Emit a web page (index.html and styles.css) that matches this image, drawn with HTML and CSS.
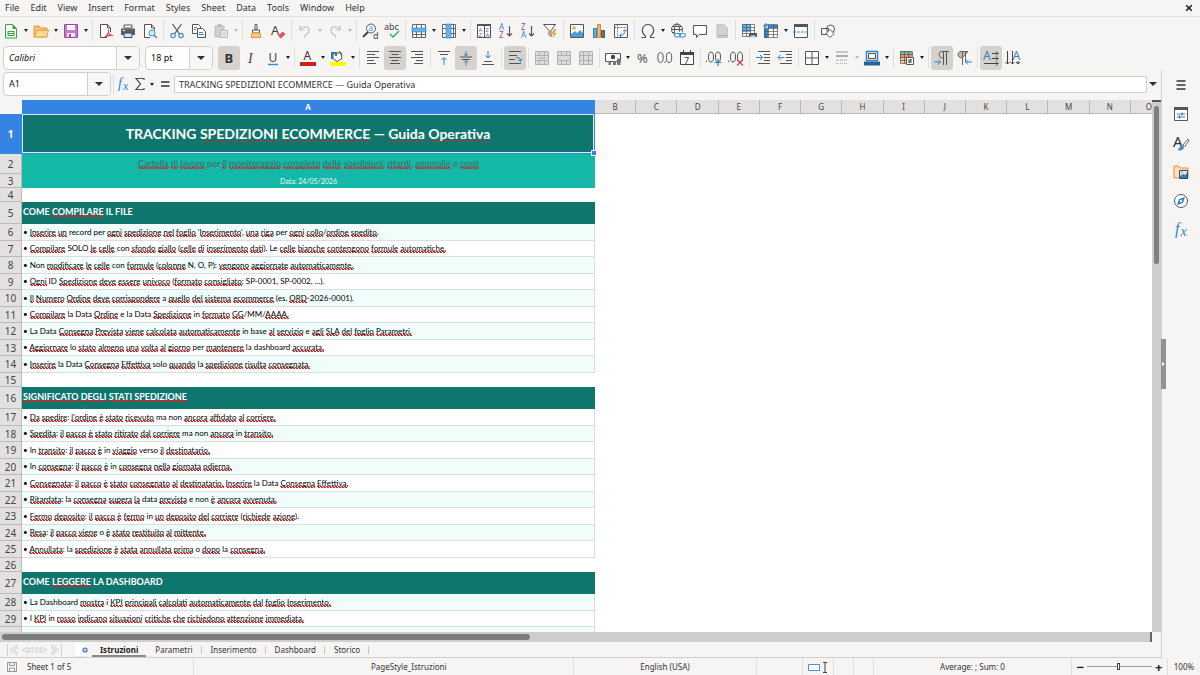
FILE: index.html
```html
<!DOCTYPE html>
<html lang="it">
<head>
<meta charset="utf-8">
<title>Tracking spedizioni ecommerce</title>
<link rel="stylesheet" href="styles.css">
</head>
<body>
<nav class="menubar" aria-label="Menu">
<button>File</button><button>Edit</button><button>View</button><button>Insert</button><button>Format</button><button>Styles</button><button>Sheet</button><button>Data</button><button>Tools</button><button>Window</button><button>Help</button>
<button class="close" aria-label="Close document"><svg viewBox="0 0 8 8"><path d="M1.2 1.2l5.6 5.6M6.8 1.2L1.2 6.8" stroke="#222" stroke-width="1.600"/></svg></button>
</nav>

<div class="toolbar standard" role="toolbar" aria-label="Standard">
<button aria-label="New"><svg viewBox="0 0 16 16"><path d="M2.500 1.500h7l4 4v9.500h-11z" fill="#fff" stroke="#37a446"/><path d="M9.500 1v5h4z" fill="#37a446"/><path d="M4.500 8h7v5h-7z" fill="#37a446"/><path d="M5.500 9.500h5M5.500 11.500h5" stroke="#fff"/></svg></button><button class="dd" aria-label="New options"></button>
<button aria-label="Open"><svg viewBox="0 0 16 16"><path d="M1 3h5l1 2h7v9H1z" fill="#f5c277" stroke="#e09a38"/><path d="M3.500 7.500h12l-2 6.500H1.500z" fill="#ffd796" stroke="#e8a548"/></svg></button><button class="dd" aria-label="Open options"></button>
<button aria-label="Save"><svg viewBox="0 0 16 16"><path d="M1.500 1.500h13v13h-13z" fill="#c77bcb" stroke="#9a4aa2"/><path d="M4 2h8v5H4z" fill="#fff"/><path d="M4 10h8v4H4z" fill="#f4e4f4"/><path d="M6 11h2v3H6z" fill="#9a4aa2"/></svg></button><button class="dd" aria-label="Save options"></button>
<i class="sep"></i>
<button aria-label="Export as PDF"><svg viewBox="0 0 16 16"><path d="M9 14.500H2.500v-13h7l3 3.500v4" fill="#fff" stroke="#555"/><path d="M9.500 1.500V5h3" fill="none" stroke="#555"/><path d="M7 14c3-2 4-4 3.500-6.500C9.500 10 12 12.500 15 12.500c-3-.5-6 0-8 1.500z" fill="none" stroke="#e0495a" stroke-width="1.200"/></svg></button>
<button aria-label="Print"><svg viewBox="0 0 16 16"><path d="M4 2h8v3H4z" fill="#fff" stroke="#555"/><path d="M1 5.500h14V12H1z" fill="#5b6064"/><path d="M4 10h8v4.500H4z" fill="#cfe6fa" stroke="#3c4a55"/><path d="M3 7.500h2" stroke="#fff"/></svg></button>
<button aria-label="Print preview"><svg viewBox="0 0 16 16"><path d="M8 14.500H2.500v-13h7l3 3.500v2" fill="#fff" stroke="#555"/><path d="M9.500 1.500V5h3" fill="none" stroke="#555"/><circle cx="10" cy="10" r="3" fill="#d4ebfb" stroke="#3b8ed0"/><path d="M12 12l3 3" stroke="#3b8ed0" stroke-width="1.500"/></svg></button>
<i class="sep"></i>
<button aria-label="Cut"><svg viewBox="0 0 16 16"><path d="M3.500 1l7 10M12.500 1l-7 10" stroke="#555" stroke-width="1.200"/><circle cx="4" cy="12.500" r="2.200" fill="none" stroke="#3b8ed0" stroke-width="1.200"/><circle cx="12" cy="12.500" r="2.200" fill="none" stroke="#3b8ed0" stroke-width="1.200"/></svg></button>
<button aria-label="Copy"><svg viewBox="0 0 16 16"><path d="M1.500 1.500h6l2 2v7h-8z" fill="#fff" stroke="#555"/><path d="M6.500 5.500h5l3 3v6h-8z" fill="#fff" stroke="#555"/><path d="M3 4.500h3M3 6.500h2M8 9.500h4M8 11.500h5" stroke="#3b8ed0"/></svg></button>
<button aria-label="Paste" disabled><svg viewBox="0 0 16 16"><path d="M2 3h9v11H2z" fill="#d2d0ce" stroke="#bbb"/><path d="M4.500 1h4v3h-4z" fill="#bbb"/><path d="M7.500 7.500h7v7h-7z" fill="#eee" stroke="#b5b5b5"/><path d="M9 10h4M9 12h4" stroke="#c4c4c4"/></svg></button><button class="dd" aria-label="Paste options" disabled></button>
<i class="sep"></i>
<button aria-label="Clone formatting"><svg viewBox="0 0 16 16"><path d="M7 1.500h2V7H7z" fill="#fff" stroke="#555"/><path d="M4.500 7h7v3h-7z" fill="#fff" stroke="#555"/><path d="M4 10h8l1 4.500H3z" fill="#f6c98a" stroke="#e09a38"/></svg></button>
<button aria-label="Clear formatting"><svg viewBox="0 0 16 16"><text x="1" y="12" fill="#444" font-size="13">A</text><path d="M8 13l4.500-4.500 3 2.500L11 15.500z" fill="#e8505b"/></svg></button>
<i class="sep"></i>
<button aria-label="Undo" disabled><svg viewBox="0 0 16 16"><path d="M3 2.500V7h4.500M3.500 6.500C6 2.500 12 3 12 7.500c0 3-3 4-5 6.500" fill="none" stroke="#c3c1bf" stroke-width="1.200"/></svg></button><button class="dd" aria-label="Undo options" disabled></button>
<button aria-label="Redo" disabled><svg viewBox="0 0 16 16"><path d="M13 2.500V7H8.500M12.500 6.500C10 2.500 4 3 4 7.500c0 3 3 4 5 6.500" fill="none" stroke="#c3c1bf" stroke-width="1.200"/></svg></button><button class="dd" aria-label="Redo options" disabled></button>
<i class="sep"></i>
<button aria-label="Find and replace"><svg viewBox="0 0 16 16"><circle cx="9" cy="5.500" r="4.500" fill="#fff" stroke="#555"/><path d="M6 9l-5 5" stroke="#444" stroke-width="2"/><text x="6.500" y="8" font-size="8" fill="#3b8ed0">a</text><text x="11" y="15.500" font-size="9" fill="#444">d</text></svg></button>
<button aria-label="Spelling"><svg viewBox="0 0 16 16"><text x="0" y="7" font-size="9" fill="#444">abc</text><path d="M6 11l3 3 6-6" fill="none" stroke="#3fae6a" stroke-width="1.500"/></svg></button>
<i class="sep"></i>
<button aria-label="Row"><svg viewBox="0 0 16 16"><path d="M1.500 1.500h13v13h-13z" fill="#fff"/><path d="M1.500 1.500h13v13h-13zM1.500 11.500h13M5.500 1v14M10.500 1v14" fill="none" stroke="#666"/><path d="M1 5h14v4H1z" fill="#63b4ee" stroke="#2c7fc0" stroke-width=".6"/></svg></button><button class="dd" aria-label="Row options"></button>
<button aria-label="Column"><svg viewBox="0 0 16 16"><path d="M1.500 1.500h13v13h-13z" fill="#fff"/><path d="M1.500 1.500h13v13h-13zM12.500 1v14M1 5.500h14M1 10.500h14" fill="none" stroke="#666"/><path d="M5 1h5v14H5z" fill="#63b4ee" stroke="#2c7fc0" stroke-width=".6"/></svg></button><button class="dd" aria-label="Column options"></button>
<i class="sep"></i>
<button aria-label="Sort"><svg viewBox="0 0 16 16"><path d="M1.500 1.500h13v13h-13zM8.500 1v14" fill="#fff" stroke="#555"/><path d="M1 1h14v2H1z" fill="#555"/><text x="2.500" y="8.500" font-size="6" fill="#2c86cd">A</text><text x="2.500" y="14" font-size="6" fill="#a349a4">Z</text><text x="9.500" y="8.500" font-size="6" fill="#a349a4">Z</text><text x="9.500" y="14" font-size="6" fill="#2c86cd">A</text></svg></button>
<button aria-label="Sort ascending"><svg viewBox="0 0 16 16"><text x="1" y="7" font-size="8" fill="#2c86cd">A</text><text x="1" y="15" font-size="8" fill="#a349a4">Z</text><path d="M11.500 3v10M9 10.500l2.500 2.500 2.500-2.500" fill="none" stroke="#555" stroke-width="1.200"/></svg></button>
<button aria-label="Sort descending"><svg viewBox="0 0 16 16"><text x="1" y="7" font-size="8" fill="#a349a4">Z</text><text x="1" y="15" font-size="8" fill="#2c86cd">A</text><path d="M11.500 3v10M9 10.500l2.500 2.500 2.500-2.500" fill="none" stroke="#555" stroke-width="1.200"/></svg></button>
<button aria-label="AutoFilter"><svg viewBox="0 0 16 16"><path d="M1.500 1.500h12l-4.500 6v6l-2-2v-4z" fill="#fff" stroke="#555"/><path d="M12 6l-3 5h2.500L9.500 15.500 15 10h-2.500L14.500 6z" fill="#f3a647"/></svg></button>
<i class="sep"></i>
<button aria-label="Insert image"><svg viewBox="0 0 16 16"><path d="M1.500 1.500h13v13h-13z" fill="#fff" stroke="#555"/><circle cx="5" cy="5" r="1.800" fill="#f3a647"/><path d="M2 14v-3l4-3 2 2 3-3 3 3v4z" fill="#4c9cd8"/></svg></button>
<button aria-label="Insert chart"><svg viewBox="0 0 16 16"><path d="M2.500 5.500h3v9h-3z" fill="#63b4ee" stroke="#2c7fc0"/><path d="M6.500 1.500h3v13h-3z" fill="#f6b469" stroke="#d98a35"/><path d="M10.500 7.500h3v7h-3z" fill="#777" stroke="#555"/></svg></button>
<button aria-label="Insert pivot table"><svg viewBox="0 0 16 16"><path d="M1.500 1.500h13v13h-13z" fill="#fff" stroke="#555"/><path d="M1.500 4.500h13M4.500 1.500v13" stroke="#777" stroke-dasharray="2 1"/><path d="M7 12.500c3.500 0 5-2 5-5.500M10 8.500l2-2 2 2M8.500 10.500l-2 2 2 2" fill="none" stroke="#2c86cd"/></svg></button>
<i class="sep"></i>
<button aria-label="Special character"><svg viewBox="0 0 16 16"><path d="M1.500 14.500h4v-1.500C0 8.500 2.500 1.500 8 1.500S16 8.500 10.500 13v1.500h4" fill="none" stroke="#555" stroke-width="1.200"/></svg></button><button class="dd" aria-label="Special character options"></button>
<button aria-label="Insert hyperlink"><svg viewBox="0 0 16 16"><g fill="none" stroke="#555"><circle cx="7" cy="6.500" r="5.500"/><ellipse cx="7" cy="6.500" rx="2.500" ry="5.500"/><path d="M1.500 6.500h11M2.500 3.500h9M2.500 9.500h4"/></g><path d="M5 9h11v7H5z" fill="#f6f5f4"/><rect x="4.500" y="10.500" width="6" height="3.500" rx="1.700" fill="none" stroke="#2c86cd"/><rect x="9.500" y="10.500" width="6" height="3.500" rx="1.700" fill="none" stroke="#2c86cd"/></svg></button>
<button aria-label="Insert comment"><svg viewBox="0 0 16 16"><path d="M1.500 2.500h13v9h-7l-3 3v-3h-3z" fill="#fff" stroke="#555"/></svg></button>
<button aria-label="Headers and footers" disabled><svg viewBox="0 0 16 16"><path d="M3 1.500h7l3.500 3.500v9.500H3z" fill="#d4d2d0" stroke="#c2c0be"/><path d="M4 12.500h9" stroke="#aaa"/></svg></button>
<i class="sep"></i>
<button aria-label="Define print area"><svg viewBox="0 0 16 16"><path d="M1.500 1.500h12v12h-12z" fill="#fff"/><path d="M1 1h9v8H1z" fill="#63b4ee"/><path d="M1.500 1.500h12v12h-12zM1.500 4.500h12M1.500 7.500h12M1.500 10.500h12M5.500 1.500v12M9.500 1.500v12" fill="none" stroke="#555" stroke-width=".7"/><path d="M8 10h8v4H8z" fill="#555"/><path d="M9.500 12.500h5V15h-5z" fill="#bfe0f7"/></svg></button>
<button aria-label="Freeze rows and columns"><svg viewBox="0 0 16 16"><path d="M1 2h14v13H1z" fill="#fff"/><path d="M5 2h10v3H5zM1 6h4v9H1z" fill="#2c86cd"/><path d="M1.500 1.500h13v13h-13zM1.500 5.500h13M1.500 8.500h13M1.500 11.500h13M5.500 1.500v13M10.500 1.500v13" fill="none" stroke="#555" stroke-width=".7"/><path d="M3 0v6M0 3h6" stroke="#2c86cd"/></svg></button><button class="dd" aria-label="Freeze options"></button>
<button aria-label="Split window"><svg viewBox="0 0 16 16"><path d="M1.500 1.500h13v13h-13z" fill="#fff" stroke="#555"/><path d="M1 1h14v3H1z" fill="#555"/><path d="M0 9h16" stroke="#2c86cd" stroke-dasharray="3 1"/></svg></button>
<i class="sep"></i>
<button aria-label="Show draw functions"><svg viewBox="0 0 16 16"><path d="M1.500 5.500h7v6h-7z" fill="none" stroke="#555"/><circle cx="10.500" cy="6" r="4" fill="none" stroke="#555"/><path d="M10 6.500l4 4-4 4-4-4z" fill="#fff" stroke="#555"/></svg></button>
</div>

<div class="toolbar formatting" role="toolbar" aria-label="Formatting">
<div class="combo font"><input aria-label="Font name" value="Calibri"><button aria-label="Font list"></button></div>
<div class="combo size"><input aria-label="Font size" value="18 pt"><button aria-label="Size list"></button></div>
<button class="on" aria-label="Bold"><svg viewBox="0 0 16 16"><text x="3.500" y="13" font-size="13" font-weight="700" fill="#333">B</text></svg></button>
<button aria-label="Italic"><svg viewBox="0 0 16 16"><text x="5" y="13" font-size="14" font-style="italic" class="serif" fill="#444">I</text></svg></button>
<button aria-label="Underline"><svg viewBox="0 0 16 16"><text x="3.500" y="12" font-size="12" fill="#444">U</text><path d="M3 14.500h10" stroke="#3b8ed0" stroke-width="1.500"/></svg></button><button class="dd" aria-label="Underline options"></button>
<i class="sep"></i>
<button aria-label="Font color"><svg viewBox="0 0 16 16"><text x="3.500" y="10" font-size="12" fill="#333">A</text><path d="M0 12h16v4H0z" fill="#c9211e"/></svg></button><button class="dd" aria-label="Font color options"></button>
<button aria-label="Background color"><svg viewBox="0 0 16 16"><path d="M3 4l8-1.500 1 6-5 3-4-3z" fill="#fff" stroke="#555"/><path d="M2 9V3h4v3" fill="none" stroke="#2c7fb0" stroke-width="2"/><path d="M9 1l3 5" stroke="#555"/><path d="M0 12h16v4H0z" fill="#ff0"/></svg></button><button class="dd" aria-label="Background color options"></button>
<i class="sep"></i>
<button aria-label="Align left"><svg viewBox="0 0 16 16"><path d="M2 1.500h12M2 4.500h8M2 7.500h12M2 10.500h7M2 13.500h9" stroke="#555"/></svg></button>
<button class="on" aria-label="Center horizontally"><svg viewBox="0 0 16 16"><path d="M2 1.500h12M4.500 4.500h7M2 7.500h12M4.500 10.500h7M3 13.500h10" stroke="#555"/></svg></button>
<button aria-label="Align right"><svg viewBox="0 0 16 16"><path d="M2 1.500h12M6 4.500h8M2 7.500h12M7 10.500h7M5 13.500h9" stroke="#555"/></svg></button>
<i class="sep"></i>
<button aria-label="Align top"><svg viewBox="0 0 16 16"><path d="M2 1.500h12M4 4.500h8" stroke="#555"/><path d="M8 15V8M5.500 10L8 7.500l2.500 2.500" fill="none" stroke="#2c86cd"/></svg></button>
<button class="on" aria-label="Center vertically"><svg viewBox="0 0 16 16"><path d="M2 7h12M4 9.500h8" stroke="#555"/><path d="M8 1v5M6 4l2 2 2-2M8 15.500v-5M6 12.500l2-2 2 2" fill="none" stroke="#2c86cd"/></svg></button>
<button aria-label="Align bottom"><svg viewBox="0 0 16 16"><path d="M2 14.500h12M4 11.500h8" stroke="#555"/><path d="M8 1v7M5.500 5.500L8 8l2.500-2.500" fill="none" stroke="#2c86cd"/></svg></button>
<i class="sep"></i>
<button class="on" aria-label="Wrap text"><svg viewBox="0 0 16 16"><path d="M2 1.500h12M2 5.500h8M2 9.500h6M2 13.500h12" stroke="#555"/><path d="M9 7.500c3 0 4.500 1 4.500 3.500M11 9.500l2.500 2 1.500-3" fill="none" stroke="#2c86cd"/></svg></button>
<i class="sep"></i>
<button aria-label="Merge and center" disabled><svg viewBox="0 0 16 16"><path d="M1.500 1.500h13v13h-13zM1.500 5.500h13M1.500 10.500h13M5.500 1.500v4M10.500 1.500v4M5.500 10.500v4M10.500 10.500v4M4 8h8" fill="#dedcda" stroke="#b2b0ae"/></svg></button>
<button aria-label="Merge cells" disabled><svg viewBox="0 0 16 16"><path d="M1.500 1.500h13v13h-13zM1.500 5.500h13M1.500 10.500h13M5.500 1.500v4M10.500 1.500v4M5.500 10.500v4M10.500 10.500v4" fill="#dedcda" stroke="#b2b0ae"/></svg></button>
<button aria-label="Split cells" disabled><svg viewBox="0 0 16 16"><path d="M1.500 1.500h13v13h-13zM1.500 5.500h13M1.500 10.500h13M5.500 1.500v13M10.500 1.500v13" fill="#dedcda" stroke="#b2b0ae"/></svg></button>
<i class="sep"></i>
<button aria-label="Currency"><svg viewBox="0 0 16 16"><path d="M.5 3.500h15v8H.5z" fill="#fff" stroke="#555"/><circle cx="8" cy="7" r="2.200" fill="#444"/><path d="M3.500 11h2.500v4H3.500zM8 11h3v4H8zM12 8.500h3.500v6.500H12z" fill="#777"/></svg></button><button class="dd" aria-label="Currency options"></button>
<button aria-label="Percent"><svg viewBox="0 0 16 16"><text x="2" y="13" font-size="13" fill="#555">%</text></svg></button>
<button aria-label="Number"><svg viewBox="0 0 16 16"><g fill="none" stroke="#555"><ellipse cx="3.500" cy="7.500" rx="2.700" ry="5"/><ellipse cx="12" cy="7.500" rx="2.700" ry="5"/><path d="M8 11.500v1.500"/></g></svg></button>
<button aria-label="Date"><svg viewBox="0 0 16 16"><path d="M1.500 2.500h13v12h-13z" fill="#fff" stroke="#444"/><path d="M1 2h14v3H1zM4 0h1v3H4zM11 0h1v3h-1z" fill="#444"/><text x="5" y="13.500" font-size="9" fill="#333">7</text></svg></button>
<i class="sep"></i>
<button aria-label="Add decimal place"><svg viewBox="0 0 16 16"><g fill="none" stroke="#555"><path d="M.5 10.500V12"/><ellipse cx="5" cy="7" rx="2.500" ry="5"/><ellipse cx="12" cy="7" rx="2.500" ry="5"/></g><path d="M12 9v7M8.500 12.500h7" stroke="#2c86cd" stroke-width="1.200"/></svg></button>
<button aria-label="Delete decimal place"><svg viewBox="0 0 16 16"><g fill="none" stroke="#555"><path d="M.5 10.500V12"/><ellipse cx="5" cy="7" rx="2.500" ry="5"/><ellipse cx="12" cy="7" rx="2.500" ry="5"/></g><path d="M9 9.500l6 6M15 9.500l-6 6" stroke="#e0404f" stroke-width="1.200"/></svg></button>
<i class="sep"></i>
<button aria-label="Increase indent"><svg viewBox="0 0 16 16"><path d="M3 1.500h12M9 4.500h6M9 7.500h6M9 10.500h6M3 13.500h12" stroke="#555"/><path d="M1 7.500h6M5 5l2.500 2.500L5 10" fill="none" stroke="#2c86cd"/></svg></button>
<button aria-label="Decrease indent"><svg viewBox="0 0 16 16"><path d="M3 1.500h12M9 4.500h6M9 7.500h6M9 10.500h6M3 13.500h12" stroke="#555"/><path d="M7.500 7.500h-6M3.500 5L1 7.500 3.500 10" fill="none" stroke="#2c86cd"/></svg></button>
<i class="sep"></i>
<button aria-label="Borders"><svg viewBox="0 0 16 16"><path d="M1.500 1.500h13v13h-13zM8 1.500v13M1.500 8h13" fill="#fff" stroke="#555"/></svg></button><button class="dd" aria-label="Border options"></button>
<button aria-label="Border style" disabled><svg viewBox="0 0 16 16"><path d="M2 2h12" stroke="#999"/><path d="M2 6h12" stroke="#aaa" stroke-width="2"/><path d="M2 10h12" stroke="#aaa" stroke-dasharray="3 1"/><path d="M2 13.500h12" stroke="#aaa" stroke-dasharray="1 1"/></svg></button><button class="dd" aria-label="Border style options" disabled></button>
<button aria-label="Border color"><svg viewBox="0 0 16 16"><path d="M2.500 1.500h11v9h-11z" fill="#fff" stroke="#2c7fc0" stroke-width="1.500"/><path d="M4.500 3.500h7v5h-7z" fill="#fff" stroke="#555"/><path d="M0 11.500h16v4H0z" fill="#2a6099"/></svg></button><button class="dd" aria-label="Border color options"></button>
<i class="sep"></i>
<button aria-label="Conditional formatting"><svg viewBox="0 0 16 16"><path d="M1 1h12v3H1z" fill="#6cc287"/><path d="M1 4h12v4H1z" fill="#f08a80"/><path d="M1 8h6v5H1z" fill="#f8c78a"/><path d="M1.500 1.500h12v12h-12zM1.500 4.500h12M1.500 7.500h12M1.500 10.500h6M5.500 1.500v12M9.500 1.500v6" fill="none" stroke="#555" stroke-width=".7"/><path d="M7.500 7.500h7v7h-7z" fill="#fff" stroke="#555"/><path d="M9 10h4M9 12h4M12 9l-2 4" stroke="#444"/></svg></button><button class="dd" aria-label="Conditional options"></button>
<i class="sep"></i>
<button class="on" aria-label="Left-to-right"><svg viewBox="0 0 16 16"><path d="M9.500 15V1.500M12.500 15V1.500M15 1.500H8C4 1.500 4 8 9 8" fill="none" stroke="#555"/><path d="M0 12h6M4 9.500L6.500 12 4 14.500" fill="none" stroke="#2c86cd"/></svg></button>
<button aria-label="Right-to-left"><svg viewBox="0 0 16 16"><path d="M6.500 15V1.500M9.500 12V1.500M12 1.500H5C1 1.500 1 8 6 8z" fill="#bbb" stroke="#666"/><path d="M16 12h-6M12 9.500L9.500 12l2.500 2.500" fill="none" stroke="#2c86cd"/></svg></button>
<i class="sep"></i>
<button class="on" aria-label="Text direction left to right"><svg viewBox="0 0 16 16"><text x="0" y="10" font-size="12" fill="#2c86cd">A</text><path d="M9 3.500h6M13 1.500l2 2-2 2M9 8.500h6M13 6.500l2 2-2 2M1 13.500h14M13 11.500l2 2-2 2" fill="none" stroke="#444"/></svg></button>
<button aria-label="Text direction top to bottom"><svg viewBox="0 0 16 16"><text x="7.500" y="10" font-size="12" fill="#2c86cd">A</text><path d="M2.500 1v13M.5 12l2 2 2-2M7.500 1v13M5.500 12l2 2 2-2M13 11v3M11 12l2 2 2-2" fill="none" stroke="#444"/></svg></button>
</div>

<div class="workspace">
<main class="main">
<div class="formulabar">
<div class="combo name"><input aria-label="Name box" value="A1"><button aria-label="Name list"></button></div>
<i class="sep"></i>
<button aria-label="Function wizard"><svg viewBox="0 0 16 16"><text x="2" y="12" font-size="14" font-style="italic" class="serif" fill="#2c86cd">f</text><text x="7" y="14" font-size="12" font-style="italic" class="serif" fill="#2c86cd">x</text></svg></button>
<button class="sum" aria-label="Select function"><svg viewBox="0 0 16 16"><path d="M12 4V2.500H4L8.500 8 4 13.500h8V12" fill="none" stroke="#555" stroke-width="1.200"/></svg></button><button class="dd" aria-label="Function list"></button>
<button class="eq" aria-label="Formula"><svg viewBox="0 0 16 16"><path d="M4 6h8.500M4 10h8.500" stroke="#333" stroke-width="1.500"/></svg></button>
<input class="formula" aria-label="Input line" value="TRACKING SPEDIZIONI ECOMMERCE — Guida Operativa">
<button class="expand" aria-label="Expand formula bar"></button>
</div>

<div class="gridrow">
<div class="gridview">
<table class="grid">
<colgroup><col class="c-head"><col class="c-a"><col span="13"><col class="c-last"></colgroup>
<thead><tr><th class="corner"></th><th class="sel">A</th><th>B</th><th>C</th><th>D</th><th>E</th><th>F</th><th>G</th><th>H</th><th>I</th><th>J</th><th>K</th><th>L</th><th>M</th><th>N</th><th>O</th></tr></thead>
<tbody>
<tr class="r-title"><th class="sel">1</th><td>TRACKING <u>SPEDIZIONI</u> <u>ECOMMERCE</u> — <u>Guida</u> <u>Operativa</u><span class="handle"></span></td></tr>
<tr class="r-sub"><th>2</th><td><u>Cartella</u> <u>di</u> <u>lavoro</u> per <u>il</u> <u>monitoraggio</u> <u>completo</u> <u>delle</u> <u>spedizioni</u>, <u>ritardi</u>, <u>anomalie</u> e <u>costi</u></td></tr>
<tr class="r-date"><th>3</th><td>Data: 24/05/2026</td></tr>
<tr class="r-gap"><th>4</th><td></td></tr>
<tr class="r-head"><th>5</th><td>COME <u>COMPILARE</u> IL FILE</td></tr>
</tbody>
<tbody class="list">
<tr><th>6</th><td>• <u>Inserire</u> <u>un</u> record per <u>ogni</u> <u>spedizione</u> <u>nel</u> <u>foglio</u> '<u>Inserimento</u>', <u>una</u> <u>riga</u> per <u>ogni</u> <u>collo</u>/<u>ordine</u> <u>spedito</u>.</td></tr>
<tr><th>7</th><td>• <u>Compilare</u> SOLO <u>le</u> <u>celle</u> con <u>sfondo</u> <u>giallo</u> (<u>celle</u> <u>di</u> <u>inserimento</u> <u>dati</u>). Le <u>celle</u> <u>bianche</u> <u>contengono</u> <u>formule</u> <u>automatiche.</u></td></tr>
<tr><th>8</th><td>• Non <u>modificare</u> <u>le</u> <u>celle</u> con <u>formule</u> (<u>colonne</u> N, O, P): <u>vengono</u> <u>aggiornate</u> <u>automaticamente.</u></td></tr>
<tr><th>9</th><td>• <u>Ogni</u> ID <u>Spedizione</u> <u>deve</u> <u>essere</u> <u>univoco</u> (<u>formato</u> <u>consigliato</u>: SP-0001, SP-0002, ...).</td></tr>
<tr><th>10</th><td>• <u>Il</u> <u>Numero</u> <u>Ordine</u> <u>deve</u> <u>corrispondere</u> a <u>quello</u> <u>del</u> <u>sistema</u> <u>ecommerce</u> (es. <u>ORD</u>-2026-0001).</td></tr>
<tr><th>11</th><td>• <u>Compilare</u> la Data <u>Ordine</u> e la Data <u>Spedizione</u> in <u>formato</u> <u>GG</u>/MM/<u>AAAA.</u></td></tr>
<tr><th>12</th><td>• La Data <u>Consegna</u> <u>Prevista</u> <u>viene</u> <u>calcolata</u> <u>automaticamente</u> in base <u>al</u> <u>servizio</u> e <u>agli</u> <u>SLA</u> <u>del</u> <u>foglio</u> <u>Parametri.</u></td></tr>
<tr><th>13</th><td>• <u>Aggiornare</u> lo <u>stato</u> <u>almeno</u> <u>una</u> <u>volta</u> <u>al</u> <u>giorno</u> per <u>mantenere</u> la dashboard <u>accurata.</u></td></tr>
<tr><th>14</th><td>• <u>Inserire</u> la Data <u>Consegna</u> <u>Effettiva</u> solo <u>quando</u> la <u>spedizione</u> <u>risulta</u> <u>consegnata.</u></td></tr>
</tbody>
<tbody>
<tr class="r-gap"><th>15</th><td></td></tr>
<tr class="r-head"><th>16</th><td><u>SIGNIFICATO</u> <u>DEGLI</u> <u>STATI</u> <u>SPEDIZIONE</u></td></tr>
</tbody>
<tbody class="list alt">
<tr><th>17</th><td>• <u>Da</u> <u>spedire</u>: <u>l'ordine</u> <u>è</u> <u>stato</u> <u>ricevuto</u> ma non <u>ancora</u> <u>affidato</u> <u>al</u> <u>corriere.</u></td></tr>
<tr><th>18</th><td>• <u>Spedita</u>: <u>il</u> <u>pacco</u> <u>è</u> <u>stato</u> <u>ritirato</u> <u>dal</u> <u>corriere</u> ma non <u>ancora</u> in <u>transito.</u></td></tr>
<tr><th>19</th><td>• In <u>transito</u>: <u>il</u> <u>pacco</u> <u>è</u> in <u>viaggio</u> verso <u>il</u> <u>destinatario.</u></td></tr>
<tr><th>20</th><td>• In <u>consegna</u>: <u>il</u> <u>pacco</u> <u>è</u> in <u>consegna</u> <u>nella</u> <u>giornata</u> <u>odierna.</u></td></tr>
<tr><th>21</th><td>• <u>Consegnata</u>: <u>il</u> <u>pacco</u> <u>è</u> <u>stato</u> <u>consegnato</u> <u>al</u> <u>destinatario.</u> <u>Inserire</u> la Data <u>Consegna</u> <u>Effettiva.</u></td></tr>
<tr><th>22</th><td>• <u>Ritardata</u>: la <u>consegna</u> <u>supera</u> <u>la</u> data <u>prevista</u> e non <u>è</u> <u>ancora</u> <u>avvenuta.</u></td></tr>
<tr><th>23</th><td>• <u>Fermo</u> <u>deposito</u>: <u>il</u> <u>pacco</u> <u>è</u> <u>fermo</u> in <u>un</u> <u>deposito</u> <u>del</u> <u>corriere</u> (<u>richiede</u> <u>azione</u>).</td></tr>
<tr><th>24</th><td>• <u>Resa</u>: <u>il</u> <u>pacco</u> <u>viene</u> o <u>è</u> <u>stato</u> <u>restituito</u> <u>al</u> <u>mittente.</u></td></tr>
<tr><th>25</th><td>• <u>Annullata</u>: la <u>spedizione</u> <u>è</u> <u>stata</u> <u>annullata</u> <u>prima</u> o <u>dopo</u> la <u>consegna.</u></td></tr>
</tbody>
<tbody>
<tr class="r-gap"><th>26</th><td></td></tr>
<tr class="r-head"><th>27</th><td>COME <u>LEGGERE</u> LA DASHBOARD</td></tr>
</tbody>
<tbody class="list">
<tr><th>28</th><td>• La Dashboard <u>mostra</u> i <u>KPI</u> <u>principali</u> <u>calcolati</u> <u>automaticamente</u> <u>dal</u> <u>foglio</u> <u>Inserimento.</u></td></tr>
<tr><th>29</th><td>• I <u>KPI</u> in <u>rosso</u> <u>indicano</u> <u>situazioni</u> <u>critiche</u> <u>che</u> <u>richiedono</u> <u>attenzione</u> <u>immediata.</u></td></tr>
<tr><th></th><td>• I KPI in verde indicano performance nella norma o superiori agli obiettivi.</td></tr>
</tbody>
</table>
</div>
<div class="vscroll"><span></span></div>
</div>
<div class="hscroll"><span></span></div>

<div class="tabs">
<div class="tabnav">
<button aria-label="First sheet"><svg viewBox="0 0 14 14"><path d="M2.500 1v12M12 2L5 7l7 5V9L8 7l4-2z" fill="none" stroke="#d2d0ce"/></svg></button>
<button aria-label="Previous sheet"><svg viewBox="0 0 14 14"><path d="M8 4L2 7l6 3zM13 4L8 7l5 3z" fill="none" stroke="#d2d0ce"/></svg></button>
<button aria-label="Next sheet"><svg viewBox="0 0 14 14"><path d="M1 4l5 3-5 3zM6 4l6 3-6 3z" fill="none" stroke="#d2d0ce"/></svg></button>
<button aria-label="Last sheet"><svg viewBox="0 0 14 14"><path d="M11.500 1v12M2 2l7 5-7 5V9l4-2-4-2z" fill="none" stroke="#d2d0ce"/></svg></button>
</div>
<button class="add" aria-label="Add sheet"><svg viewBox="0 0 14 14"><path d="M1 0h8l3 3v11H1z" fill="#fff"/><path d="M1 14h11" stroke="#ccc"/><circle cx="11" cy="7" r="2.600" fill="#3573b8"/><path d="M11 5.500v3M9.500 7h3" stroke="#fff"/></svg></button>
<div class="tablist" role="tablist"><button role="tab" aria-selected="true" class="active">Istruzioni</button><button role="tab">Parametri</button><button role="tab">Inserimento</button><button role="tab">Dashboard</button><button role="tab">Storico</button></div>
</div>
</main>

<aside class="sidebar" aria-label="Sidebar">
<button aria-label="Sidebar settings"><svg viewBox="0 0 16 16"><path d="M3.500 4h9M3.500 8h9M3.500 12h9" stroke="#333" stroke-width="1.400"/></svg></button>
<button aria-label="Properties"><svg viewBox="0 0 16 16"><path d="M1.500 1.500h13v13h-13z" fill="#fff" stroke="#555"/><path d="M1 1h14v3H1z" fill="#555"/><path d="M4 8h8M4 11h8" stroke="#2c86cd"/><path d="M9 6.500v3M6.500 9.500v3" stroke="#555"/></svg></button>
<button aria-label="Styles"><svg viewBox="0 0 16 16"><text x="0" y="12" font-size="15" fill="#333">A</text><path d="M15 4l-5 6 1.500 1.500L16 6z" fill="#fff" stroke="#666"/><path d="M4 15c4 1 7 0 7-3l-2-2c-3 1-2 4-5 5z" fill="#3b8ed0"/></svg></button>
<button aria-label="Gallery"><svg viewBox="0 0 16 16"><path d="M1 2h4l2 2h8v10H1z" fill="#fbe0bc" stroke="#ec8a3e"/><path d="M6.500 6.500h8v8h-8z" fill="#d4ebfb" stroke="#444"/><path d="M7 14v-2l3-2 2 1 2-2v5z" fill="#2c7fc0"/><circle cx="9" cy="8.500" r="1" fill="#f3a647"/></svg></button>
<button aria-label="Navigator"><svg viewBox="0 0 16 16"><circle cx="8" cy="8" r="6.500" fill="#fff" stroke="#555"/><path d="M12 4l-2 6-6 2 2-6z" fill="#2c86cd"/><circle cx="8" cy="8" r="1.300" fill="#fff"/></svg></button>
<button aria-label="Functions"><svg viewBox="0 0 16 16"><text x="2" y="12" font-size="16" font-style="italic" class="serif" fill="#2c86cd">f</text><text x="7.500" y="14" font-size="14" font-style="italic" class="serif" fill="#2c86cd">x</text></svg></button>
<span class="grip"></span>
</aside>
</div>

<footer class="status">
<span class="s-save"><svg viewBox="0 0 12 12"><path d="M1.500 1.500h9v9h-9zM3.500 1.500v3h5v-3M3.500 10V7h5v3" fill="none" stroke="#999"/></svg></span>
<span class="s-sheet">Sheet 1 of 5</span>
<span class="s-style">PageStyle_Istruzioni</span>
<span class="s-lang">English (USA)</span>
<span class="s-blank"></span>
<span class="s-mode"><svg viewBox="0 0 20 12"><path d="M.5 3.500h11v6H.5z" fill="#fff" stroke="#4a90d0"/><path d="M15 1.500h4M15 11.500h4M17 1.500v10" stroke="#444"/></svg></span>
<span class="s-small"></span>
<span class="s-small"></span>
<span class="s-sum">Average: ; Sum: 0</span>
<span class="s-zoom"><button aria-label="Zoom out">−</button><input type="range" aria-label="Zoom" min="0" max="100" value="49"><button aria-label="Zoom in">+</button></span>
<span class="s-pct">100%</span>
</footer>
</body>
</html>
```
FILE: styles.css
```css
* { box-sizing: border-box; }
html, body { height: 100%; }
body {
  margin: 0;
  display: flex;
  flex-direction: column;
  overflow: hidden;
  background: #f6f5f4;
  color: #333;
  font: 9px/14px "Noto Sans", sans-serif;
}
button, input { font: inherit; color: inherit; margin: 0; }
button { border: 0; padding: 0; background: none; flex: none; }
svg { display: block; width: 16px; height: 16px; overflow: visible; font-family: "Noto Sans", sans-serif; }
.serif { font-family: "Liberation Serif", serif; }

.menubar { display: flex; gap: 11px; height: 17px; padding: 0 7px 0 5px; border-bottom: 1px solid #e4e2e0; flex: none; }
.menubar button { height: 16px; }
.menubar .close { margin-left: auto; }
.menubar .close svg { width: 8px; height: 8px; }

.toolbar { display: flex; align-items: center; height: 27px; flex: none; }
.toolbar > button { display: grid; place-items: center; width: 22px; height: 24px; border-radius: 3px; }
.toolbar > .on { background: #d5d1cd; }
.toolbar > .dd, .formulabar > .dd { width: 8px; }
.dd::after { content: ""; border: 2px solid transparent; border-top: 3px solid #222; border-bottom: 0; }
.dd:disabled::after { border-top-color: #bbb; }
.sep { flex: none; width: 1px; height: 21px; margin: 0 2px; background: #e1dfdd; }

.combo { display: flex; height: 24px; border: 1px solid #d2ceca; border-radius: 4px; background: #fff; overflow: hidden; flex: none; }
.combo input { flex: 1; min-width: 0; border: 0; background: none; padding: 0 5px; outline: 0; color: #111; }
.combo button { display: grid; place-items: center; width: 23px; border-left: 1px solid #d2ceca; background: #f8f7f6; }
.combo button::after, .expand::after { content: ""; border: 4px solid transparent; border-top: 4px solid #333; border-bottom: 0; }
.font { width: 137px; margin: 0 5px 0 3px; }
.font input { font-style: italic; }
.size { width: 68px; margin-right: 5px; }

.workspace { display: flex; flex: 1; min-height: 0; }
.main { display: flex; flex-direction: column; flex: 1; min-width: 0; }
.formulabar { display: flex; align-items: center; height: 29px; padding: 0 3px 3px; flex: none; }
.formulabar > button { display: grid; place-items: center; width: 16px; height: 22px; }
.formulabar > .eq { width: 18px; }
.name { width: 108px; }
.formula { flex: 1; min-width: 0; height: 17px; border: 1px solid #d2ceca; background: #fff; padding: 0 4px; outline: 0; }
.formulabar > .expand { width: 11px; }

.gridrow { display: flex; flex: 1; min-height: 0; }
.gridview { flex: 1; min-width: 0; overflow: hidden; background: #fff; }
.grid { width: 100%; table-layout: fixed; border-collapse: separate; border-spacing: 0; }
.c-head { width: 22px; }
.c-a { width: 573px; }
.c-last { width: 21px; }
.grid th, .grid td { padding: 0; overflow: hidden; white-space: nowrap; line-height: 12px; }
.grid th { background: #e2e1e0; color: #444; font-size: 10px; font-weight: 400; border-right: 1px solid #bcbab8; border-bottom: 1px solid #bcbab8; }
.grid thead tr { height: 14px; }
.grid .corner { background: #f6f5f4; border-color: #f6f5f4; }
.grid thead th { font-size: 8px; }
.grid thead th:last-child { text-align: right; border-right: 0; }
.grid .sel { background: #3584e4; color: #fff; font-weight: 700; border-color: #3584e4; }
.grid td { font-family: Lato, sans-serif; font-size: 8px; color: #000; vertical-align: middle; }
.grid u { text-decoration: none; background: linear-gradient(45deg, transparent 25%, #d22 25% 75%, transparent 75%) 0 100% / 3px 2px repeat-x; }
.r-title { height: 40px; }
.grid .r-title td {
  position: relative;
  overflow: visible;
  text-align: center;
  font-size: 14px;
  line-height: 20px;
  font-weight: 700;
  color: #fff;
  background: #0f766e;
  box-shadow: inset 0 0 0 1px #d8ecf5;
  border-right: 1px solid #3584e4;
  border-bottom: 1px solid #3584e4;
}
.grid .r-title u { background-size: 3px 1px; }
.handle { position: absolute; right: -2px; bottom: -2px; width: 4px; height: 4px; background: #3584e4; outline: 1px solid #fff; }
.r-sub { height: 20px; }
.r-date { height: 14px; }
.grid .r-sub td, .grid .r-date td { background: #14b8a6; text-align: center; }
.grid .r-sub td { color: #47696a; font-size: 9px; }
.grid .r-date td { color: #e8fffb; font-size: 7px; }
.r-gap { height: 14px; }
.r-head { height: 22px; }
.grid .r-head td { background: #0f766e; color: #fff; font-size: 9px; font-weight: 700; padding: 0 0 2px 1px; }
.list tr { height: 16px; }
.list tr:nth-child(odd) { height: 17px; }
.grid .list td { padding: 0 0 1px 1px; border-right: 1px solid #d5e0df; border-bottom: 1px solid #d5e0df; }
.list:not(.alt) tr:nth-child(odd) td, .alt tr:nth-child(even) td { background: #f0fdfa; }

.vscroll { width: 9px; padding: 4px 2px 0; background: #cecece; border-top: 2px solid #555; flex: none; }
.vscroll span { display: block; height: 30%; border-radius: 3px; background: #7f7f7f; }
.hscroll { height: 10px; padding: 2px 0 2px 2px; margin-right: 9px; background: #cecece; border-right: 2px solid #666; flex: none; }
.hscroll span { display: block; width: 46%; height: 6px; border-radius: 3px; background: #7b7d7b; }

.tabs { display: flex; height: 16px; border-bottom: 1px solid #d2ceca; font-size: 8px; flex: none; }
.tabnav { display: flex; padding: 1px 0 0 5px; width: 74px; }
.tabnav button { width: 15px; }
.tabnav svg, .add svg { width: 14px; height: 14px; }
.add { width: 18px; }
.tablist { display: flex; }
.tablist button { position: relative; padding: 0 9px; height: 15px; }
.tablist button:not(.active)::after { content: ""; position: absolute; right: 0; top: 4px; height: 8px; border-right: 1px solid #c5c3c1; }
.tablist .active { font-weight: 700; box-shadow: inset 0 -2px #888; color: #222; padding: 0 8px; }

.sidebar { position: relative; display: flex; flex-direction: column; align-items: center; width: 39px; gap: 13px; padding: 6px 0 0; border-left: 1px solid #d2ceca; flex: none; }
.grip { position: absolute; left: -1px; top: 268px; width: 5px; height: 50px; background: #929292; }
.grip::after { content: ""; position: absolute; left: 1px; top: 23px; border: 2px solid transparent; border-left: 3px solid #fff; border-right: 0; }

.status { display: flex; height: 17px; font-size: 8px; flex: none; }
.status > span { display: flex; align-items: center; justify-content: center; border-right: 1px solid #e1dfdd; }
.status > .s-save { width: 23px; border: 0; }
.s-save svg { width: 12px; height: 12px; }
.status > .s-sheet { width: 171px; justify-content: flex-start; padding-left: 4px; }
.status > .s-style { justify-content: flex-start; padding-left: 177px; width: 380px; }
.status > .s-lang { width: 183px; }
.s-blank { flex: 1; }
.s-mode { width: 31px; }
.s-mode svg { width: 20px; height: 12px; }
.s-small { width: 20px; }
.s-sum { width: 198px; }
.s-zoom { width: 96px; gap: 3px; }
.s-zoom button { font-size: 13px; line-height: 14px; font-weight: 700; color: #222; }
.s-zoom input { appearance: none; width: 65px; height: 12px; background: linear-gradient(#999, #999) 0 50% / 100% 1px no-repeat; }
.s-zoom input::-webkit-slider-thumb { appearance: none; width: 3px; height: 7px; border: 1px solid #444; background: #fff; }
.status > .s-pct { width: 32px; border: 0; }
```
